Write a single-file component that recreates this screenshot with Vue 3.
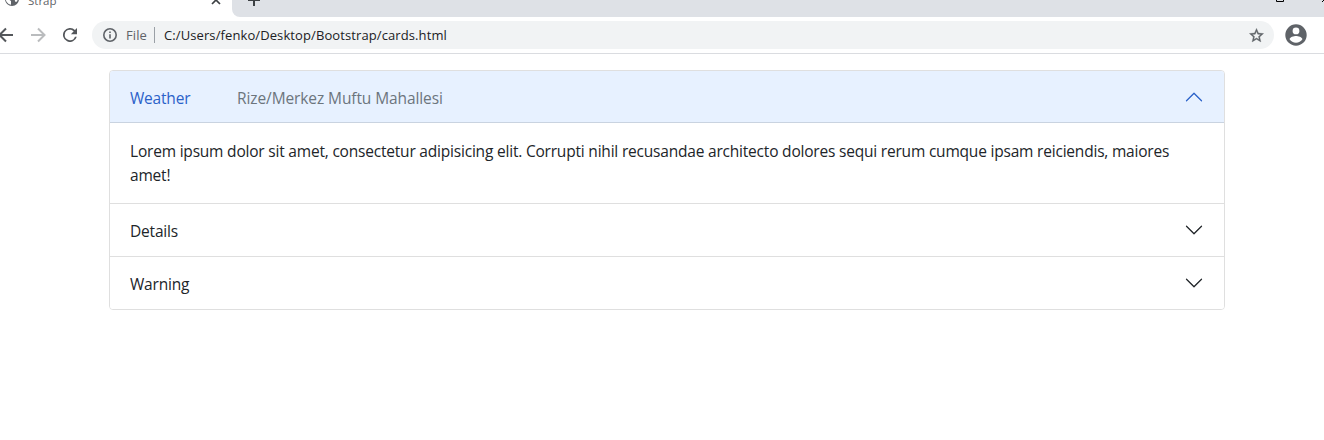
<script setup>
import { ref } from 'vue'

const items = ref([
  {
    title: 'Weather',
    place: 'Rize/Merkez Muftu Mahallesi',
    open: true,
    lines: [
      'Lorem ipsum dolor sit amet, consectetur adipisicing elit. Corrupti nihil recusandae architecto dolores sequi rerum cumque ipsam reiciendis, maiores',
      'amet!',
    ],
  },
  { title: 'Details', open: false, lines: [] },
  { title: 'Warning', open: false, lines: [] },
])
</script>

<template>
  <div class="window">
    <header class="tabs">
      <div class="tab">
        <svg class="globe" width="16" height="16" viewBox="0 0 16 16">
          <circle cx="8" cy="8" r="7" fill="#5f6368" />
          <path d="M2 6.500 7 10v3.800A6 6 0 0 1 2 6.500ZM9 2.500 8 5 6 6.500 6 8.500h4.500l1 2.500 1.500-.5A6 6 0 0 0 10.500 2.600Z" fill="#fff" />
        </svg>
        <span class="tab-title">Strap</span>
        <svg class="close" width="10" height="10" viewBox="0 0 10 10"><path d="m1 1 8 8M9 1 1 9" /></svg>
      </div>
      <div class="strip">
        <svg class="plus" width="14" height="14" viewBox="0 0 14 14"><path d="M7 1v12M1 7h12" /></svg>
        <svg class="maximize" width="10" height="10" viewBox="0 0 10 10"><path d="M1.500.5h7v9h-7z" /></svg>
        <svg class="quit" width="10" height="10" viewBox="0 0 10 10"><path d="m0 0 10 10M10 0 0 10" /></svg>
      </div>
    </header>

    <nav class="toolbar">
      <svg class="nav back" width="16" height="16" viewBox="0 0 16 16"><path d="M15 8H2M8 1.500 1.500 8 8 14.500" /></svg>
      <svg class="nav forward" width="16" height="16" viewBox="0 0 16 16"><path d="M1 8h13M8 1.500 14.500 8 8 14.500" /></svg>
      <svg class="reload" width="16" height="16" viewBox="0 0 16 16">
        <path d="M13.650 2.350A8 8 0 1 0 15.730 10h-2.080A6 6 0 1 1 8 2c1.660 0 3.140.69 4.220 1.780L9 7h7V0z" />
      </svg>
      <div class="address">
        <svg class="info" width="14" height="14" viewBox="0 0 14 14">
          <circle cx="7" cy="7" r="6.200" />
          <path d="M7 6.200v4.300M7 3.500v1.600" />
        </svg>
        <span class="scheme">File</span>
        <span class="bar"></span>
        <span class="url">C:/Users/fenko/Desktop/Bootstrap/cards.html</span>
        <svg class="star" width="17" height="17" viewBox="0 0 24 24">
          <path d="m22 9.240-7.190-.62L12 2 9.190 8.630 2 9.240l5.460 4.730L5.820 21 12 17.270 18.180 21l-1.630-7.030zM12 15.400l-3.760 2.270 1-4.280-3.320-2.880 4.380-.38L12 6.100l1.710 4.040 4.380.38-3.320 2.880 1 4.280z" />
        </svg>
      </div>
      <svg class="profile" width="26" height="26" viewBox="1 1 22 22">
        <path d="M12 1.300a10.700 10.700 0 1 0 0 21.400 10.700 10.700 0 0 0 0-21.400zm0 3.200a3.400 3.400 0 1 1 0 6.800 3.400 3.400 0 0 1 0-6.800zm0 15.200a7.700 7.700 0 0 1-6.400-3.400c0-2.100 4.300-3.300 6.400-3.300s6.400 1.200 6.400 3.300a7.700 7.700 0 0 1-6.400 3.400z" />
      </svg>
    </nav>

    <main class="accordion">
      <section v-for="item in items" :key="item.title" class="item" :class="{ open: item.open }">
        <button class="head" type="button" @click="item.open = !item.open">
          <span class="title">{{ item.title }}</span>
          <span v-if="item.place" class="place">{{ item.place }}</span>
          <svg class="chevron" width="20" height="20" viewBox="0 0 16 16">
            <path fill-rule="evenodd" d="M1.646 4.646a.5.5 0 0 1 .708 0L8 10.293l5.646-5.647a.5.5 0 0 1 .708.708l-6 6a.5.5 0 0 1-.708 0l-6-6a.5.5 0 0 1 0-.708z" />
          </svg>
        </button>
        <div v-if="item.open && item.lines.length" class="body">
          <div v-for="line in item.lines" :key="line"><span>{{ line }}</span></div>
        </div>
      </section>
    </main>
  </div>
</template>

<style>
html,
body {
  overflow: hidden;
  background: #fff;
}
</style>

<style scoped>
.window {
  height: 440px;
  overflow: hidden;
  background: #fff;
  font-family: "Open Sans", "Noto Sans", sans-serif;
  color: #212529;
}
svg {
  display: block;
  flex: none;
}
.tabs {
  display: flex;
  height: 17px;
  overflow: hidden;
  background: #fff;
}
.tab {
  display: flex;
  width: 232px;
  align-items: flex-start;
}
.globe {
  margin: -9px 0 0 4px;
}
.tab-title {
  margin: -9px 0 0 8px;
  font-size: 11.5px;
  line-height: 19px;
  color: #5f6368;
}
.close {
  margin: -5px 11px 0 auto;
}
.close path,
.plus path {
  stroke: #3c4043;
  stroke-width: 1.7;
}
.strip {
  display: flex;
  flex: 1;
  background: #dee1e6;
  border-bottom-left-radius: 8px;
}
.plus {
  margin: -7px 0 0 15px;
}
.plus path {
  stroke-width: 2;
}
.maximize {
  margin: -8px 0 0 auto;
  fill: none;
  stroke: #000;
}
.quit {
  margin: -8px -8px 0 37px;
  stroke: #000;
}
.toolbar {
  display: flex;
  box-sizing: border-box;
  height: 37px;
  align-items: center;
  border-bottom: 1px solid #dadce0;
}
.nav {
  fill: none;
  stroke: #54575b;
  stroke-width: 2;
}
.back {
  margin-left: -2px;
}
.forward {
  margin-left: 16px;
  stroke: #babcbe;
}
.reload {
  width: 14px;
  height: 14px;
  margin-left: 17px;
  fill: #54575b;
}
.address {
  display: flex;
  box-sizing: border-box;
  width: 1182px;
  height: 28px;
  margin-left: 15px;
  padding: 0 10px 0 11px;
  align-items: center;
  border-radius: 14px;
  background: #f1f3f4;
  font-size: 13px;
  letter-spacing: 0.1px;
  white-space: nowrap;
}
.info {
  fill: none;
  stroke: #5f6368;
  stroke-width: 1.6;
}
.scheme {
  width: 28px;
  margin-left: 9px;
  color: #5f6368;
}
.bar {
  width: 1px;
  height: 16px;
  background: #9aa0a6;
}
.url {
  margin-left: 9px;
  color: #202124;
}
.star {
  margin-left: auto;
  margin-right: -0.5px;
  fill: #5f6368;
  stroke: #5f6368;
  stroke-width: 0.5;
}
.profile {
  width: 22px;
  height: 22px;
  margin-left: 11px;
  fill: #5f6368;
}
.accordion {
  box-sizing: border-box;
  width: 1116px;
  margin: 16px 0 0 109px;
  overflow: hidden;
  border: 1px solid #dfdfdf;
  border-radius: 4px;
  font-size: 15.5px;
  letter-spacing: -0.2px;
}
.item + .item {
  border-top: 1px solid #dfdfdf;
}
.head {
  display: flex;
  box-sizing: border-box;
  width: 100%;
  height: 52px;
  margin: 0;
  padding: 2px 20px 0;
  align-items: center;
  border: 0;
  background: #fff;
  color: #212529;
  font: inherit;
  letter-spacing: inherit;
  line-height: 24px;
}
.open .head {
  background: #e7f1ff;
  box-shadow: inset 0 -1px 0 #c9d3e0;
  color: #2b62c9;
}
.title {
  flex: none;
}
.open .title {
  width: 59px;
}
.place {
  margin-left: 48px;
  color: #6c757d;
  letter-spacing: -0.1px;
}
.chevron {
  margin: -3px 0 0 auto;
  fill: #212529;
}
.open .chevron {
  fill: #2b62c9;
  transform: rotate(180deg);
}
.body {
  box-sizing: border-box;
  height: 80px;
  padding: 16px 20px;
  line-height: 24px;
  white-space: nowrap;
}
</style>
